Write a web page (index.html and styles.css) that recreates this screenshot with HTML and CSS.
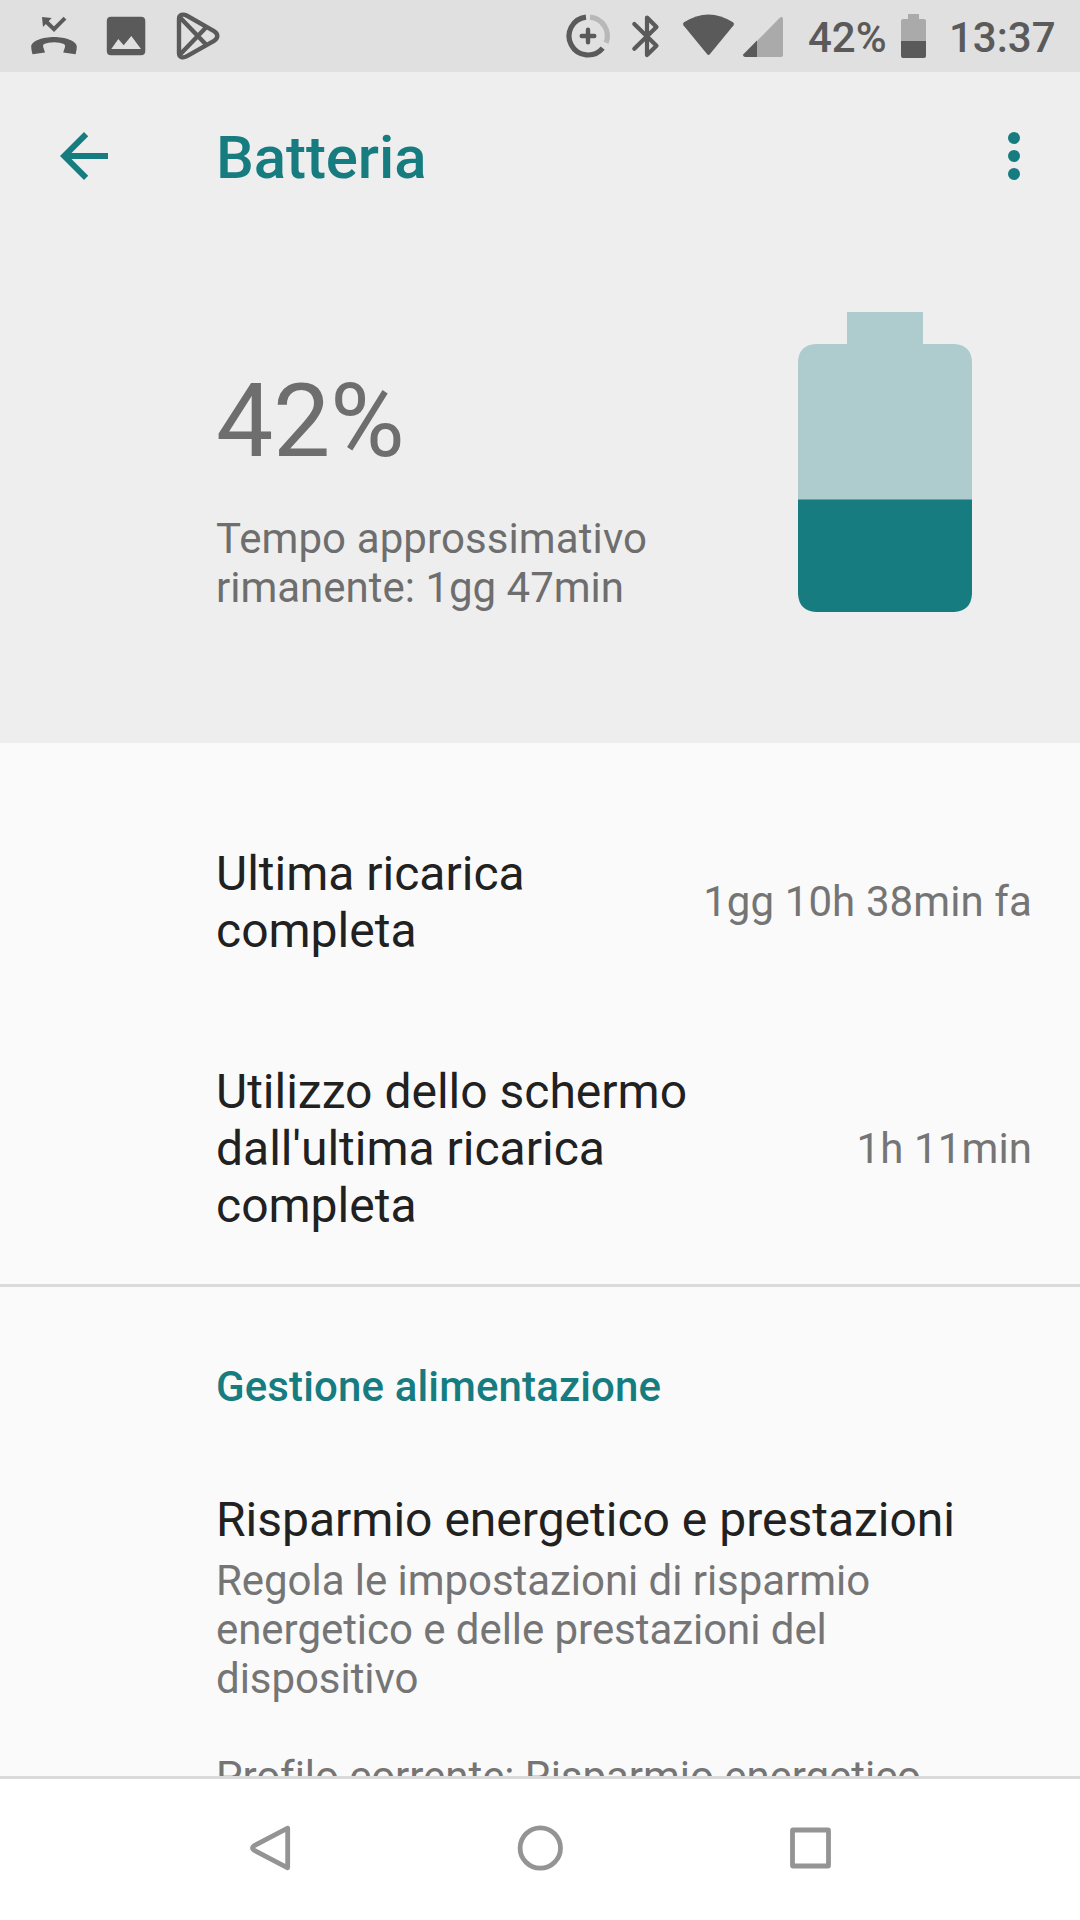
FILE: index.html
```html
<!DOCTYPE html>
<html lang="it">
<head>
<meta charset="utf-8">
<title>Batteria</title>
<link rel="stylesheet" href="styles.css">
</head>
<body>
<div class="screen">
  <div class="status-bar">
    <div class="notifications">
      <svg width="60" height="72" viewBox="24 0 60 72">
        <path class="ink" d="M32.5 54.3Q31.2 50 31.2 46.5C31.4 41 43 37 54 37S76.6 41 76.8 46.5Q76.8 50 75.6 54.3L63.2 52.6L65 47Q65.4 45 64 44Q60 42.2 54 42.2T44 44Q42.6 45 43.2 47L45 52.6ZM42 17L51.7 18L43 27Z"/>
        <path class="line" stroke-width="4" d="M45 20.5L54 29.2L65 18.2"/>
      </svg>
      <svg width="60" height="72" viewBox="96 0 60 72">
        <path class="ink" fill-rule="evenodd" d="M111 16.7H141Q145.3 16.7 145.3 21V51Q145.3 55.2 141 55.2H111Q106.8 55.2 106.8 51V21Q106.8 16.7 111 16.7ZM111.3 49H141L131.3 36L123.7 45.3L118.3 39Z"/>
      </svg>
      <svg width="60" height="72" viewBox="168 0 60 72">
        <path class="line" stroke-width="4.4" d="M179 19C179 14.5 183 13.6 187 15.8L214 31.2C218.4 34 218.4 38 214 40.8L187 56.2C183 58.4 179 57.5 179 53ZM180 17.5L206 44.5M180 54.5L206 27.5"/>
      </svg>
    </div>
    <div class="system">
      <svg width="60" height="72" viewBox="560 0 60 72">
        <path class="line" stroke-width="5.2" d="M586 17.1A19 19 0 1 0 602.7 48.1"/>
        <path class="line line-dim" stroke-width="5.2" d="M590 17.1A19 19 0 0 1 606.1 42.8"/>
        <path class="line round" stroke-width="4.4" d="M588 29.7V42.3M581.7 36H594.3"/>
      </svg>
      <svg width="50" height="72" viewBox="620 0 50 72">
        <path class="line round" stroke-width="4.2" d="M634.3 24L656.5 45.8L647 55V17.5L656.5 27L634.3 48.8"/>
      </svg>
      <svg width="66" height="72" viewBox="670 0 66 72">
        <path class="ink" d="M684 22.3Q708.5 6.5 733 22.3Q734.6 23.5 733.6 25.2L710 54Q708.5 55.8 707 54L683.4 25.2Q682.4 23.5 684 22.3Z"/>
      </svg>
      <svg width="54" height="72" viewBox="736 0 54 72">
        <path class="dim" d="M757 41L780 17.5Q783 16 783 19V55Q783 57 781 57H757Z"/>
        <path class="ink" d="M757 40.5V57H745Q742.4 56.3 743.4 54.3Z"/>
      </svg>
      <span class="level">42%</span>
      <svg width="38" height="72" viewBox="895 0 38 72">
        <path class="dim" d="M908 14H919V19H924Q926 19 926 21V41H901V21Q901 19 903 19H908Z"/>
        <path class="ink" d="M901 41H926V56Q926 58 924 58H903Q901 58 901 56Z"/>
      </svg>
      <span class="clock">13:37</span>
    </div>
  </div>

  <header class="header">
    <div class="toolbar">
      <svg class="back" width="72" height="72" viewBox="0 0 24 24">
        <path d="M20 11H7.83l5.59-5.59L12 4l-8 8 8 8 1.41-1.41L7.83 13H20v-2z"/>
      </svg>
      <h1 class="title">Batteria</h1>
      <svg class="more" width="72" height="72" viewBox="0 0 24 24">
        <circle cx="12" cy="6" r="2"/><circle cx="12" cy="12" r="2"/><circle cx="12" cy="18" r="2"/>
      </svg>
    </div>
    <div class="summary">
      <div class="estimate">
        <div class="percent">42%</div>
        <p class="remaining"><span class="loose">Tempo approssimativo</span><br>rimanente: 1gg 47min</p>
      </div>
      <svg class="battery" width="174" height="300" viewBox="0 0 174 300">
        <path class="battery-empty" d="M49 0H125V32H156Q174 33 174 51V188H0V51Q0 33 18 32H49Z"/>
        <path class="battery-charge" d="M0 187.4H174V282Q173 299 156 300H18Q1 299 0 282Z"/>
      </svg>
    </div>
  </header>

  <main class="content">
    <section class="usage">
      <div class="row">
        <div class="label">Ultima ricarica<br>completa</div>
        <div class="value">1gg 10h 38min fa</div>
      </div>
      <div class="row">
        <div class="label">Utilizzo dello schermo<br>dall'ultima ricarica<br>completa</div>
        <div class="value">1h 11min</div>
      </div>
    </section>
    <section class="management">
      <h2 class="section-title">Gestione alimentazione</h2>
      <div class="label">Risparmio energetico e prestazioni</div>
      <p class="detail">Regola le impostazioni di risparmio<br>energetico e delle prestazioni del<br>dispositivo<br><br>Profilo corrente: Risparmio energetico</p>
    </section>
  </main>

  <nav class="nav-bar">
    <svg width="60" height="60" viewBox="0 0 60 60"><path d="M47.7 10.2V49.8L13.9 32.2Q11 30 13.9 27.8Z"/></svg>
    <svg width="60" height="60" viewBox="0 0 60 60"><circle cx="30.3" cy="30" r="20.2"/></svg>
    <svg width="60" height="60" viewBox="0 0 60 60"><rect x="12.5" y="12" width="36" height="36" rx="0.5"/></svg>
  </nav>
</div>
</body>
</html>
```
FILE: styles.css
```css
* { box-sizing: border-box; margin: 0; padding: 0; }

body {
  font-family: Roboto, "Noto Sans", sans-serif;
  color: #212121;
  background: #fafafa;
}

svg { display: block; flex: none; }

.screen {
  width: 1080px;
  height: 1920px;
  display: flex;
  flex-direction: column;
  overflow: hidden;
}

/* Status bar */
.status-bar {
  flex: none;
  height: 72px;
  display: flex;
  justify-content: space-between;
  background: #e0e0e0;
  color: #5a5a5a;
  font-size: 42px;
  font-weight: 500;
  line-height: 49px;
}
.notifications { display: flex; gap: 12px; padding-left: 24px; }
.system { display: flex; width: 520px; }
.level { width: 87px; padding: 13px 0 0 18px; margin-right: 18px; white-space: nowrap; }
.clock { padding: 13px 0 0 16px; }
.ink { fill: #5a5a5a; }
.dim { fill: #aaa; }
.line { fill: none; stroke: #5a5a5a; }
.line-dim { stroke: #b8b8b8; }
.round { stroke-linecap: round; stroke-linejoin: round; }

/* Header */
.header { flex: none; height: 671px; background: #eee; }
.toolbar {
  height: 168px;
  display: flex;
  align-items: center;
  padding: 0 30px 0 48px;
}
.back, .more { fill: #167c80; }
.title {
  flex: 1;
  margin: 3px 0 0 96px;
  font-size: 60px;
  font-weight: 500;
  line-height: 70px;
  letter-spacing: -0.1px;
  color: #167c80;
}
.summary {
  display: flex;
  justify-content: space-between;
  align-items: flex-start;
  padding: 72px 108px 0 216px;
}
.estimate { padding-top: 49px; color: #6e6e6e; }
.percent { font-size: 102px; line-height: 120px; letter-spacing: -0.3px; }
.remaining { margin-top: 33px; font-size: 42px; line-height: 49px; }
.loose { letter-spacing: 0.1px; }
.battery-empty { fill: #aecbce; }
.battery-charge { fill: #167c80; }

/* Content */
.content { flex: 1; min-height: 0; overflow: hidden; }
.usage {
  height: 544px;
  display: flex;
  flex-direction: column;
  gap: 104px;
  padding: 102px 48px 0 216px;
  border-bottom: 3px solid #dadada;
}
.row { display: flex; align-items: center; justify-content: space-between; }
.label { font-size: 48px; line-height: 57px; }
.value { font-size: 42px; line-height: 50px; letter-spacing: 0.1px; color: #757575; }
.management { padding: 75px 48px 0 216px; }
.section-title {
  margin-bottom: 80px;
  font-size: 42px;
  font-weight: 500;
  line-height: 49px;
  letter-spacing: 0.13px;
  color: #167c80;
}
.detail {
  margin-top: 8px;
  font-size: 42px;
  line-height: 49px;
  letter-spacing: -0.05px;
  color: #757575;
}

/* Navigation bar */
.nav-bar {
  flex: none;
  height: 144px;
  display: flex;
  justify-content: center;
  align-items: center;
  gap: 210px;
  padding-bottom: 3px;
  background: #fff;
  border-top: 3px solid #dadada;
}
.nav-bar path, .nav-bar circle, .nav-bar rect {
  fill: none;
  stroke: #949494;
  stroke-width: 4.8;
  stroke-linejoin: round;
}
```
